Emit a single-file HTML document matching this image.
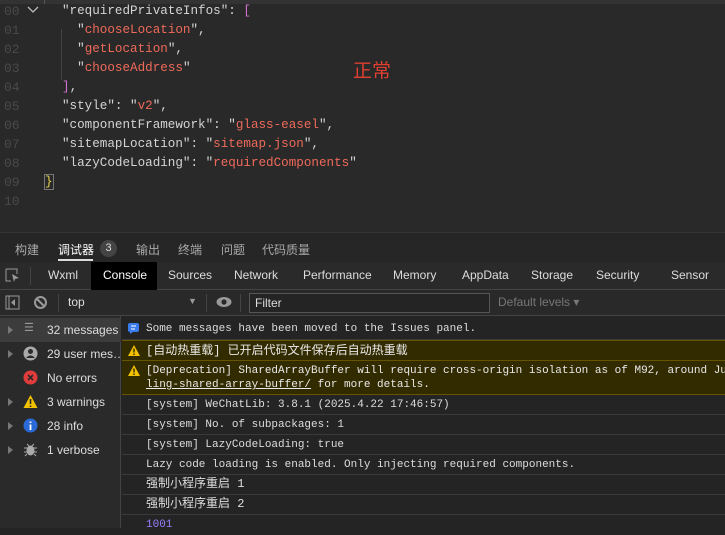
<!DOCTYPE html>
<html><head><meta charset="utf-8"><style>
*{margin:0;padding:0;box-sizing:border-box}
body{width:725px;height:528px;overflow:hidden;background:#242424;font-family:"Liberation Sans","Noto Sans CJK SC",sans-serif;position:relative}
.abs{position:absolute}
#ed{left:0;top:0;width:725px;height:232px;background:#292929}
.ln{position:absolute;left:4px;font:13px "Liberation Mono",monospace;color:#4a4a4a}
.cl{position:absolute;left:62px;font:12.6px "Liberation Mono","Noto Sans CJK SC",monospace;color:#d4d4d4;white-space:pre}
.s{color:#ef6a5a}.p{color:#d070d0}
.tab1{top:241px;font-size:12px;color:#aaa}
.tab2{top:268px;font-size:12px;color:#ddd}
.msg{position:absolute;left:122px;width:603px;font:11px/14px "Liberation Mono","Noto Sans CJK SC",monospace;color:#ddd;border-bottom:1px solid #3a3a3a;padding-left:24px;white-space:pre;overflow:hidden}
.warn{background:#332b00;border-top:1px solid #665500;border-bottom:1px solid #665500;color:#e8e8e8}
.sb{position:absolute;left:0;width:121px;height:24px;font-size:12px;color:#ddd}
.sb span{position:absolute;left:47px;top:5px;white-space:nowrap}
.tri{position:absolute;left:8px;top:8px;width:0;height:0;border-left:5px solid #777;border-top:4px solid transparent;border-bottom:4px solid transparent}
</style></head><body>
<div id="ed" class="abs">
<div class="abs" style="left:0;top:0;width:725px;height:4px;background:#333"></div>
<div class="abs" style="left:44px;top:0;width:1px;height:4px;background:#555"></div>
<div class="abs" style="left:61px;top:29px;width:1px;height:51px;background:#444"></div>
<div class="ln" style="top:4px">00</div><div class="ln" style="top:23px">01</div><div class="ln" style="top:42px">02</div><div class="ln" style="top:61px">03</div><div class="ln" style="top:80px">04</div><div class="ln" style="top:99px">05</div><div class="ln" style="top:118px">06</div><div class="ln" style="top:137px">07</div><div class="ln" style="top:156px">08</div><div class="ln" style="top:175px">09</div><div class="ln" style="top:194px">10</div>
<svg class="abs" style="left:27px;top:6px" width="12" height="8"><path d="M1 1L6 6L11 1" stroke="#bbb" fill="none" stroke-width="1.3"/></svg>
<div class="cl" style="top:4px">"requiredPrivateInfos": <span class="p">[</span></div>
<div class="cl" style="top:23px">  "<span class="s">chooseLocation</span>",</div>
<div class="cl" style="top:42px">  "<span class="s">getLocation</span>",</div>
<div class="cl" style="top:61px">  "<span class="s">chooseAddress</span>"</div>
<div class="cl" style="top:80px"><span class="p">]</span>,</div>
<div class="cl" style="top:99px">"style": "<span class="s">v2</span>",</div>
<div class="cl" style="top:118px">"componentFramework": "<span class="s">glass-easel</span>",</div>
<div class="cl" style="top:137px">"sitemapLocation": "<span class="s">sitemap.json</span>",</div>
<div class="cl" style="top:156px">"lazyCodeLoading": "<span class="s">requiredComponents</span>"</div>
<div class="cl" style="top:175px;left:45px;color:#e8d44d;outline:1px solid #777">}</div>
<div class="abs" style="left:353px;top:56px;font-size:19px;color:#e04030;font-family:'Noto Sans CJK SC',sans-serif">正常</div>
</div>
<div class="abs" style="left:0;top:232px;width:725px;height:30px;background:#262626;border-top:1px solid #333"></div>
<div class="abs tab1" style="left:15px">构建</div>
<div class="abs tab1" style="left:58px;color:#fff">调试器</div>
<div class="abs" style="left:58px;top:259px;width:35px;height:2px;background:#ddd"></div>
<div class="abs" style="left:100px;top:240px;width:17px;height:17px;border-radius:50%;background:#444;color:#ddd;font-size:11px;text-align:center;line-height:17px">3</div>
<div class="abs tab1" style="left:136px">输出</div><div class="abs tab1" style="left:178px">终端</div><div class="abs tab1" style="left:221px">问题</div><div class="abs tab1" style="left:262px">代码质量</div>
<div class="abs" style="left:0;top:262px;width:725px;height:28px;background:#2a2a2a;border-bottom:1px solid #444"></div>
<svg class="abs" style="left:5px;top:268px" width="15" height="15"><path d="M1 1H12V6M1 1V13H6" stroke="#999" fill="none"/><path d="M7 6L14 10L10 11L9 14Z" fill="#999"/></svg>
<div class="abs" style="left:30px;top:267px;width:1px;height:18px;background:#444"></div>
<div class="abs" style="left:91px;top:262px;width:66px;height:28px;background:#000"></div>
<div class="abs tab2" style="left:48px">Wxml</div><div class="abs tab2" style="left:103px;color:#fff">Console</div><div class="abs tab2" style="left:168px">Sources</div><div class="abs tab2" style="left:234px">Network</div><div class="abs tab2" style="left:303px">Performance</div><div class="abs tab2" style="left:393px">Memory</div><div class="abs tab2" style="left:462px">AppData</div><div class="abs tab2" style="left:531px">Storage</div><div class="abs tab2" style="left:596px">Security</div><div class="abs tab2" style="left:671px">Sensor</div>
<div class="abs" style="left:0;top:290px;width:725px;height:26px;background:#292929;border-bottom:1px solid #444"></div>
<svg class="abs" style="left:5px;top:295px" width="15" height="15"><rect x="1" y="1" width="13" height="13" fill="none" stroke="#999"/><path d="M4 1V14" stroke="#999"/><path d="M10 4L6 7.5L10 11Z" fill="#999"/></svg>
<svg class="abs" style="left:33px;top:295px" width="15" height="15"><circle cx="7.5" cy="7.5" r="5.5" fill="none" stroke="#999" stroke-width="2"/><path d="M3.5 3.5L11.5 11.5" stroke="#999" stroke-width="2"/></svg>
<div class="abs" style="left:58px;top:294px;width:1px;height:18px;background:#444"></div>
<div class="abs" style="left:68px;top:295px;font-size:12px;color:#ddd">top</div>
<div class="abs" style="left:188px;top:296px;font-size:9px;color:#999">▼</div>
<div class="abs" style="left:206px;top:294px;width:1px;height:18px;background:#444"></div>
<svg class="abs" style="left:216px;top:296px" width="16" height="12"><ellipse cx="8" cy="6" rx="7.5" ry="5" fill="#999"/><circle cx="8" cy="6" r="2.6" fill="#292929"/></svg>
<div class="abs" style="left:240px;top:294px;width:1px;height:18px;background:#444"></div>
<div class="abs" style="left:249px;top:293px;width:241px;height:20px;border:1px solid #555;background:#242424;font-size:12px;color:#ddd;padding:2px 5px">Filter</div>
<div class="abs" style="left:498px;top:295px;font-size:12px;color:#777">Default levels ▾</div>
<div class="abs" style="left:0;top:316px;width:121px;height:212px;background:#2a2a2a;border-right:1px solid #444"></div>
<div class="sb" style="top:318px;background:#3c3c3c"><i class="tri"></i><span style="left:24px;color:#999;font-size:11px;top:3px">☰</span><span>32 messages</span></div>
<div class="sb" style="top:342px"><i class="tri"></i><svg class="abs" style="left:23px;top:4px" width="15" height="15"><circle cx="7.5" cy="7.5" r="7" fill="#aaa"/><circle cx="7.5" cy="5.5" r="2.5" fill="#2a2a2a"/><path d="M3 12Q7.5 7 12 12" fill="#2a2a2a"/></svg><span>29 user mes…</span></div>
<div class="sb" style="top:366px"><svg class="abs" style="left:23px;top:4px" width="15" height="15"><circle cx="7.5" cy="7.5" r="7" fill="#e03c3c"/><path d="M5 5L10 10M10 5L5 10" stroke="#2a2a2a" stroke-width="1.6"/></svg><span>No errors</span></div>
<div class="sb" style="top:390px"><i class="tri"></i><svg class="abs" style="left:23px;top:4px" width="15" height="15"><path d="M7.5 1L14.5 14H0.5Z" fill="#f2c200"/><path d="M7.5 5V10M7.5 11.5V13" stroke="#2a2a2a" stroke-width="1.6"/></svg><span>3 warnings</span></div>
<div class="sb" style="top:414px"><i class="tri"></i><svg class="abs" style="left:23px;top:4px" width="15" height="15"><circle cx="7.5" cy="7.5" r="7" fill="#2a6ad8"/><path d="M7.5 6.5V12M7.5 3.5V5" stroke="#fff" stroke-width="1.8"/></svg><span>28 info</span></div>
<div class="sb" style="top:438px"><i class="tri"></i><svg class="abs" style="left:24px;top:4px" width="13" height="15"><ellipse cx="6.5" cy="8.5" rx="4" ry="5" fill="#aaa"/><path d="M0 6H13M0 10H13M1 14L3 12M12 14L10 12M3 2L5 4M10 2L8 4" stroke="#aaa"/></svg><span>1 verbose</span></div>
<div class="msg" style="top:319px;height:21px;padding-top:3px"><svg class="abs" style="left:6px;top:4px" width="11" height="11"><rect x="0" y="0" width="11" height="9" rx="2" fill="#3a7bf0"/><path d="M2 11L2 8L5 9Z" fill="#3a7bf0"/><path d="M3 3H8M3 6H7" stroke="#fff"/></svg>Some messages have been moved to the Issues panel.</div>
<div class="msg warn" style="top:340px;height:21px;padding-top:3px;font-size:12px"><svg class="abs" style="left:6px;top:4px" width="12" height="11"><path d="M6 0L12 11H0Z" fill="#f2c200"/><path d="M6 3.5V7.5M6 8.5V10" stroke="#332b00" stroke-width="1.4"/></svg>[自动热重载] 已开启代码文件保存后自动热重载</div>
<div class="msg warn" style="top:360px;height:35px;padding-top:3px;line-height:14px"><svg class="abs" style="left:6px;top:4px" width="12" height="11"><path d="M6 0L12 11H0Z" fill="#f2c200"/><path d="M6 3.5V7.5M6 8.5V10" stroke="#332b00" stroke-width="1.4"/></svg>[Deprecation] SharedArrayBuffer will require cross-origin isolation as of M92, around Ju
<u>ling-shared-array-buffer/</u> for more details.</div>
<div class="msg" style="top:395px;height:20px;padding-top:3px">[system] WeChatLib: 3.8.1 (2025.4.22 17:46:57)</div>
<div class="msg" style="top:415px;height:20px;padding-top:3px">[system] No. of subpackages: 1</div>
<div class="msg" style="top:435px;height:20px;padding-top:3px">[system] LazyCodeLoading: true</div>
<div class="msg" style="top:455px;height:20px;padding-top:3px">Lazy code loading is enabled. Only injecting required components.</div>
<div class="msg" style="top:475px;height:20px;padding-top:2px;font-size:12px;line-height:15px">强制小程序重启 1</div>
<div class="msg" style="top:495px;height:20px;padding-top:2px;font-size:12px;line-height:15px">强制小程序重启 2</div>
<div class="msg" style="top:515px;height:20px;padding-top:3px;color:#9980ff;border:none">1001</div>
</body></html>
